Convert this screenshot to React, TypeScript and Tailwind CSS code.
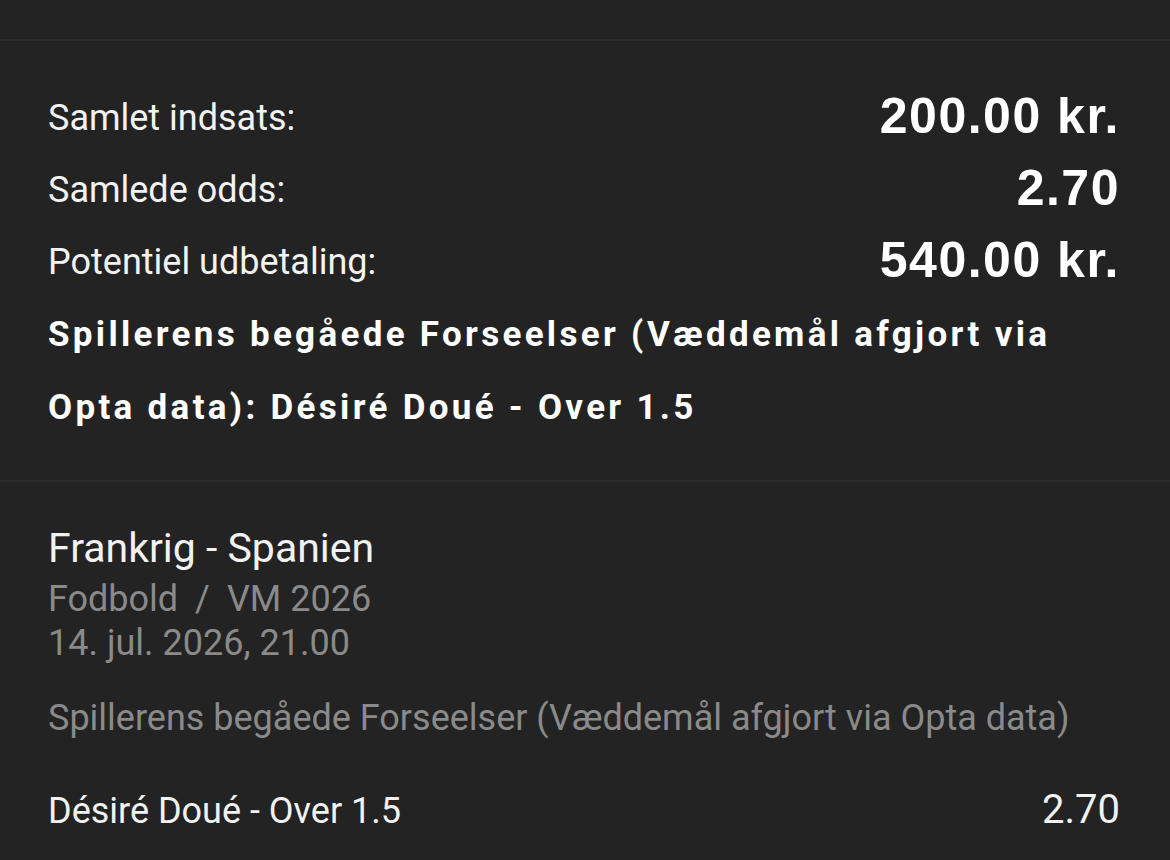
import React from "react";

const roboto = { fontFamily: "Roboto, 'Noto Sans', sans-serif" };
const arial = { fontFamily: "'Liberation Sans', Arial, sans-serif" };

function SummaryRow({ label, value }: { label: string; value: string }) {
  return (
    <div className="flex h-[72px] items-center justify-between">
      <span className="text-[36px] text-[#f2f2f2]" style={roboto}>
        {label}
      </span>
      <span
        className="relative top-[-2px] text-[50px] font-bold tracking-[1.5px] text-white"
        style={arial}
      >
        {value}
      </span>
    </div>
  );
}

export default function App() {
  return (
    <div className="min-h-[860px] w-full bg-[#232323]" style={roboto}>
      <div className="h-[41px] border-b-2 border-[#2c2c2c]" />

      <section className="pl-[48px] pr-[50px] pt-[41px] pb-[36px]">
        <SummaryRow label="Samlet indsats:" value="200.00 kr." />
        <SummaryRow label="Samlede odds:" value="2.70" />
        <SummaryRow label="Potentiel udbetaling:" value="540.00 kr." />
        <p className="text-[35px] font-bold leading-[73px] tracking-[3.3px] text-white">
          Spillerens begåede Forseelser (Væddemål afgjort via Opta data):
          Désiré Doué - Over 1.5
        </p>
      </section>

      <div className="border-t-2 border-[#2c2c2c]" />

      <section className="pl-[48px] pr-[50px] pt-[41px]">
        <div className="text-[41px] leading-[50px] text-[#f2f2f2]">
          Frankrig - Spanien
        </div>
        <div className="mt-[4px] text-[36px] leading-[44px] text-[#8a8a8a]">
          Fodbold <span className="mx-[8px]">/</span> VM 2026
        </div>
        <div className="mt-[2px] text-[36px] leading-[40px] text-[#8a8a8a]">
          14. jul. 2026, 21.00
        </div>
        <div className="mt-[33px] text-[36px] leading-[44px] text-[#8a8a8a]">
          Spillerens begåede Forseelser (Væddemål afgjort via Opta data)
        </div>
        <div className="mt-[46px] flex items-baseline justify-between leading-[48px] text-[#f2f2f2]">
          <span className="text-[36px]">Désiré Doué - Over 1.5</span>
          <span className="text-[40px]">2.70</span>
        </div>
      </section>
    </div>
  );
}
